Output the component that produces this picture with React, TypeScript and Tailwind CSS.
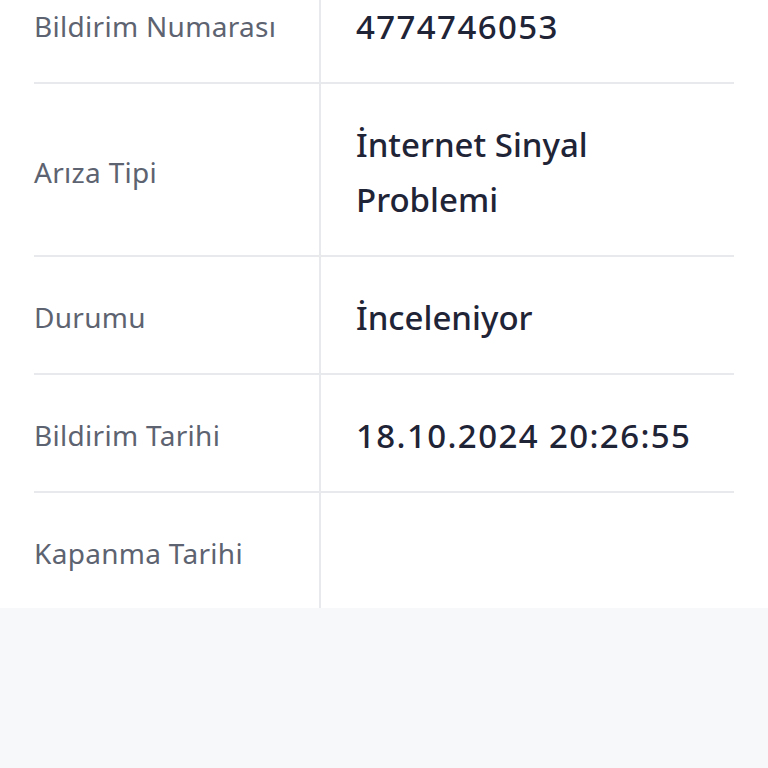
const rows: { label: string; value: string; h: string; numeric?: boolean }[] = [
  { label: "Bildirim Numarası", value: "4774746053", h: "h-[118px]", numeric: true },
  { label: "Arıza Tipi", value: "İnternet Sinyal Problemi", h: "h-[173px]" },
  { label: "Durumu", value: "İnceleniyor", h: "h-[118px]" },
  { label: "Bildirim Tarihi", value: "18.10.2024 20:26:55", h: "h-[118px]", numeric: true },
  { label: "Kapanma Tarihi", value: "", h: "h-[115px]" },
];

export default function App() {
  return (
    <div
      className="min-h-[802px] bg-[#f7f8fa]"
      style={{ fontFamily: "'Noto Sans', sans-serif" }}
    >
      <div className="-mt-[34px] bg-white px-[34px]">
        {rows.map((row, i) => (
          <div
            key={row.label}
            className={`flex ${row.h} ${i < rows.length - 1 ? "border-b-2 border-[#e8e9ec]" : ""}`}
          >
            <div className="flex w-[287px] shrink-0 items-center pt-[4px] border-r-2 border-[#e8e9ec] text-[28px] tracking-[0.3px] text-[#5d6370]">
              {row.label}
            </div>
            <div
              className={`flex flex-1 items-center pt-[4px] pr-[36px] pl-[35px] text-[33px] leading-[55px] font-medium text-[#1f2436] ${row.numeric ? "tracking-[1.4px]" : ""}`}
            >
              {row.value}
            </div>
          </div>
        ))}
      </div>
    </div>
  );
}
